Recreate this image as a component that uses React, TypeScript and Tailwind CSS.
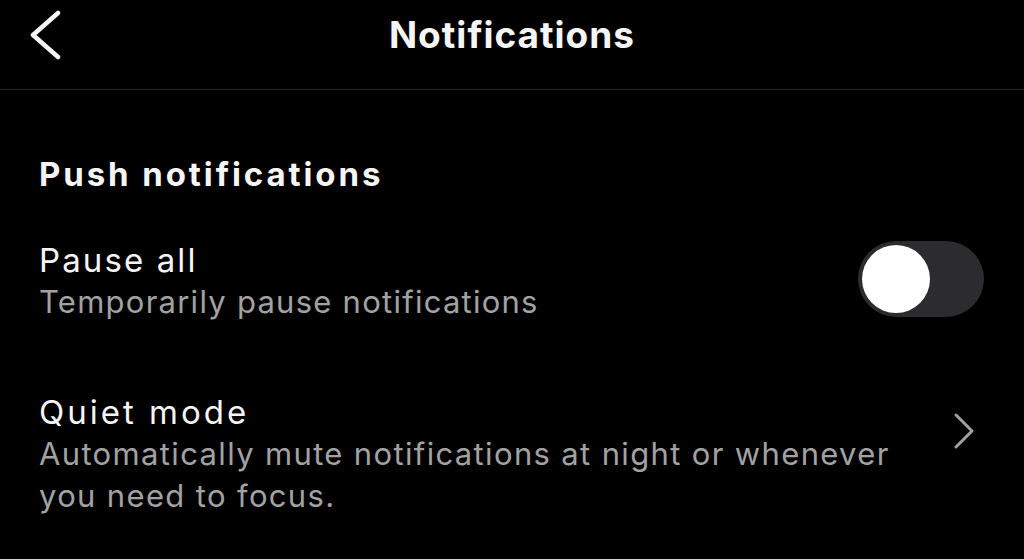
import { useState } from 'react';

const font = { fontFamily: 'Inter, "Liberation Sans", sans-serif' };

function Toggle({ on, onChange }: { on: boolean; onChange: (v: boolean) => void }) {
  return (
    <button
      onClick={() => onChange(!on)}
      className={`mt-[2px] flex h-[76px] w-[126px] shrink-0 items-center rounded-full p-[4px] ${on ? 'justify-end bg-[#3797f0]' : 'justify-start bg-[#2c2c2e]'}`}
    >
      <span className="block h-[68px] w-[68px] rounded-full bg-white" />
    </button>
  );
}

export default function App() {
  const [paused, setPaused] = useState(false);

  return (
    <div className="min-h-[559px] w-full bg-black text-[#f5f5f5]" style={font}>
      {/* Header */}
      <div className="grid h-[90px] grid-cols-[1fr_auto_1fr] items-center border-b border-[#262626] pb-[20px]">
        <div className="pl-[30px]">
          <svg width="32" height="50" viewBox="0 0 32 50" fill="none" stroke="#f5f5f5" strokeWidth="4.5" strokeLinecap="round" strokeLinejoin="round">
            <polyline points="28,3 3,25 28,47" />
          </svg>
        </div>
        <h1 className="text-[37px] font-bold leading-[40px] tracking-[1px]">Notifications</h1>
        <div />
      </div>

      <div className="pl-[39px] pr-[40px] pt-[64px]">
        <h2 className="text-[33px] font-bold leading-[40px] tracking-[2.9px]">Push notifications</h2>

        {/* Pause all */}
        <div className="mt-[45px] flex items-start justify-between">
          <div>
            <p className="text-[33px] leading-[42px] tracking-[2.1px]">Pause all</p>
            <p className="text-[31px] leading-[42px] tracking-[1.25px] text-[#a2a2a2]">Temporarily pause notifications</p>
          </div>
          <Toggle on={paused} onChange={setPaused} />
        </div>

        {/* Quiet mode */}
        <div className="mt-[68px] flex items-start justify-between">
          <div className="w-[880px]">
            <p className="text-[33px] leading-[42px] tracking-[3px]">Quiet mode</p>
            <p className="text-[31px] leading-[42px] tracking-[1.35px] text-[#a2a2a2]">
              Automatically mute notifications at night or whenever you need to focus.
            </p>
          </div>
          <svg className="mr-[8px] mt-[21px]" width="24" height="38" viewBox="0 0 24 38" fill="none" stroke="#a2a2a2" strokeWidth="3" strokeLinecap="round" strokeLinejoin="round">
            <polyline points="4,3 20,19 4,35" />
          </svg>
        </div>
      </div>
    </div>
  );
}
